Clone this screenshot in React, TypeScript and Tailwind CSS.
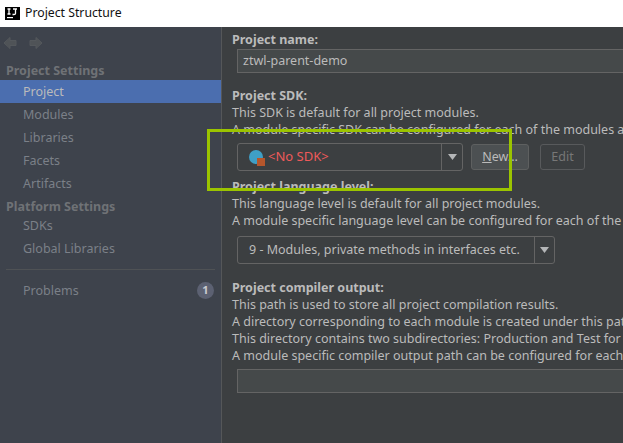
import React from "react";

function NavItem({ label, active }: { label: string; active?: boolean }) {
  return (
    <div className={`h-[23px] pl-[23px] leading-[23px] text-[12.5px] ${active ? "bg-[#4b6eaf] text-[#bbbbbb]" : "text-[#7b8088]"}`}>
      {label}
    </div>
  );
}

function Arrow({ flip }: { flip?: boolean }) {
  return (
    <svg width="14" height="14" viewBox="0 0 14 14" className={flip ? "rotate-180" : ""}>
      <path d="M1 7 L7 1.5 V4.5 H13 V9.5 H7 V12.5 Z" fill="#4f5357" stroke="#54585c" strokeWidth="1" />
    </svg>
  );
}

function Caret() {
  return (
    <svg width="9" height="6" viewBox="0 0 9 6">
      <path d="M0 0 H9 L4.5 6 Z" fill="#b4b6b8" />
    </svg>
  );
}

function Help({ children }: { children: React.ReactNode }) {
  return <div className="h-[17px] leading-[17px] whitespace-nowrap text-[12.5px] text-[#bbbbbb]">{children}</div>;
}

function Heading({ children }: { children: React.ReactNode }) {
  return <div className="h-[17px] leading-[17px] whitespace-nowrap text-[12.5px] font-bold text-[#bbbbbb]">{children}</div>;
}

export default function App() {
  return (
    <div className="relative flex h-[443px] w-[623px] flex-col overflow-hidden bg-[#3c3f41] font-['Noto_Sans',sans-serif]">
      <div className="flex h-[27px] shrink-0 items-center gap-[5px] bg-white pl-[5px]">
        <svg width="15" height="13" viewBox="0 0 15 13">
          <rect width="15" height="13" fill="#000" />
          <path d="M2.5 2 H5.5 M4 2 V7 M2.5 7 H5.5 M8 2 H12 M10.5 2 V6.5 Q10.5 7.5 9 7.5 H7.5" fill="none" stroke="#fff" strokeWidth="1.3" />
          <rect x="2" y="10" width="6" height="1.2" fill="#fff" />
        </svg>
        <span className="text-[12.25px] text-[#111111]">Project Structure</span>
      </div>
      <div className="flex min-h-0 flex-1">
        <div className="flex w-[222px] shrink-0 flex-col border-r border-[#555759] bg-[#3e434c]">
          <div className="flex h-[32px] items-center gap-[12px] pl-[3px]">
            <Arrow />
            <Arrow flip />
          </div>
          <div className="h-[21px] pl-[6px] text-[12.5px] font-bold leading-[24px] text-[#6f7276]">Project Settings</div>
          <NavItem label="Project" active />
          <NavItem label="Modules" />
          <NavItem label="Libraries" />
          <NavItem label="Facets" />
          <NavItem label="Artifacts" />
          <div className="h-[19px] pl-[6px] text-[12.5px] font-bold leading-[23px] text-[#6f7276]">Platform Settings</div>
          <NavItem label="SDKs" />
          <NavItem label="Global Libraries" />
          <div className="mx-[6px] mt-[9px] border-t border-[#4f5255]" />
          <div className="mt-[9px] flex h-[23px] items-center justify-between pl-[23px] pr-[7px] text-[12.5px] text-[#7b8088]">
            <span className="pt-[1px]">Problems</span>
            <span className="flex h-[17px] w-[17px] items-center justify-center rounded-full bg-[#5c6172] text-[11px] font-bold text-[#c9cbd0]">1</span>
          </div>
        </div>
        <div className="min-w-0 flex-1 overflow-hidden pl-[10px] pt-[4px]">
          <Heading>Project name:</Heading>
          <div className="ml-[5px] mt-[1px] h-[24px] w-[500px] border border-[#646464] bg-[#45494a] pl-[5px] text-[12.5px] leading-[22px] text-[#bbbbbb]">ztwl-parent-demo</div>
          <div className="mt-[14px]"><Heading>Project SDK:</Heading></div>
          <Help>This SDK is default for all project modules.</Help>
          <Help>A module specific SDK can be configured for each of the modules as required.</Help>
          <div className="ml-[5px] mt-[5px] flex items-center">
            <div className="flex h-[28px] w-[226px] items-center rounded-[3px] border border-[#646464] bg-[#3c3f41]">
              <div className="flex flex-1 items-center gap-[4px] pl-[11px]">
                <span className="relative block h-[15px] w-[15px]">
                  <span className="absolute left-0 top-0 h-[14px] w-[14px] rounded-full bg-[#3f9fc6]" />
                  <span className="absolute bottom-[-1px] right-[-1px] h-[8px] w-[8px] bg-[#b5562c]" />
                </span>
                <span className="text-[13px] text-[#ee5a5a]">&lt;No SDK&gt;</span>
              </div>
              <div className="flex h-full w-[21px] items-center justify-center border-l border-[#646464]"><Caret /></div>
            </div>
            <button className="ml-[8px] h-[26px] w-[58px] rounded-[3px] border border-[#5e6060] bg-[#4c5052] text-[12.5px] text-[#bbbbbb]"><u>N</u>ew...</button>
            <button className="ml-[11px] h-[26px] w-[45px] rounded-[3px] border border-[#585a5c] text-[12.5px] text-[#777777]">Edit</button>
          </div>
          <div className="mt-[7px]"><Heading>Project language level:</Heading></div>
          <Help>This language level is default for all project modules.</Help>
          <Help>A module specific language level can be configured for each of the modules as required.</Help>
          <div className="ml-[5px] mt-[7px] flex h-[28px] w-[318px] items-center rounded-[3px] border border-[#646464]">
            <div className="flex-1 pl-[11px] text-[12.5px] text-[#bbbbbb]">9 - Modules, private methods in interfaces etc.</div>
            <div className="flex h-full w-[20px] items-center justify-center border-l border-[#646464]"><Caret /></div>
          </div>
          <div className="mt-[15px]"><Heading>Project compiler output:</Heading></div>
          <Help>This path is used to store all project compilation results.</Help>
          <Help>A directory corresponding to each module is created under this path.</Help>
          <Help>This directory contains two subdirectories: Production and Test for production code and test sources.</Help>
          <Help>A module specific compiler output path can be configured for each of the modules as required.</Help>
          <div className="ml-[5px] mt-[5px] h-[24px] w-[500px] border border-[#646464] bg-[#45494a]" />
        </div>
      </div>
      <div className="absolute left-[207px] top-[129px] h-[62px] w-[305px] border-[3px] border-[#9bc400]" />
    </div>
  );
}
